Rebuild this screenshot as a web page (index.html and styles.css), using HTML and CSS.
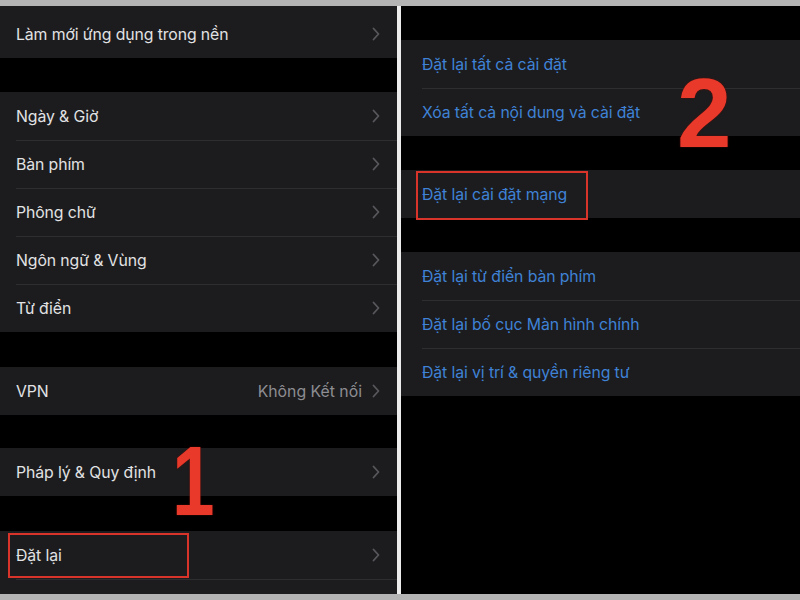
FILE: index.html
```html
<!DOCTYPE html>
<html lang="vi">
<head>
<meta charset="utf-8">
<title>Đặt lại</title>
<link rel="stylesheet" href="styles.css">
</head>
<body>
<div class="frame">
  <div class="panel left">
    <div class="group first">
      <div class="row"><span class="label">Làm mới ứng dụng trong nền</span><svg class="chev" viewBox="0 0 8 14"><polyline points="1.5,1.5 6.5,7 1.5,12.5"/></svg></div>
    </div>
    <div class="gap g34"></div>
    <div class="group">
      <div class="row"><span class="label">Ngày &amp; Giờ</span><svg class="chev" viewBox="0 0 8 14"><polyline points="1.5,1.5 6.5,7 1.5,12.5"/></svg></div>
      <div class="row"><span class="label">Bàn phím</span><svg class="chev" viewBox="0 0 8 14"><polyline points="1.5,1.5 6.5,7 1.5,12.5"/></svg></div>
      <div class="row"><span class="label">Phông chữ</span><svg class="chev" viewBox="0 0 8 14"><polyline points="1.5,1.5 6.5,7 1.5,12.5"/></svg></div>
      <div class="row"><span class="label">Ngôn ngữ &amp; Vùng</span><svg class="chev" viewBox="0 0 8 14"><polyline points="1.5,1.5 6.5,7 1.5,12.5"/></svg></div>
      <div class="row"><span class="label">Từ điển</span><svg class="chev" viewBox="0 0 8 14"><polyline points="1.5,1.5 6.5,7 1.5,12.5"/></svg></div>
    </div>
    <div class="gap g35"></div>
    <div class="group">
      <div class="row"><span class="label">VPN</span><span class="value">Không Kết nối</span><svg class="chev" viewBox="0 0 8 14"><polyline points="1.5,1.5 6.5,7 1.5,12.5"/></svg></div>
    </div>
    <div class="gap g33"></div>
    <div class="group">
      <div class="row"><span class="label">Pháp lý &amp; Quy định</span><svg class="chev" viewBox="0 0 8 14"><polyline points="1.5,1.5 6.5,7 1.5,12.5"/></svg></div>
    </div>
    <div class="gap g35"></div>
    <div class="group">
      <div class="row"><span class="label">Đặt lại</span><svg class="chev" viewBox="0 0 8 14"><polyline points="1.5,1.5 6.5,7 1.5,12.5"/></svg></div>
      <div class="row"></div>
    </div>
    <div class="mark box1"></div>
    <div class="num num1">1</div>
  </div>
  <div class="divider"></div>
  <div class="panel right">
    <div class="gap g34"></div>
    <div class="group blue">
      <div class="row"><span class="label">Đặt lại tất cả cài đặt</span></div>
      <div class="row"><span class="label">Xóa tất cả nội dung và cài đặt</span></div>
    </div>
    <div class="gap g34"></div>
    <div class="group blue">
      <div class="row"><span class="label">Đặt lại cài đặt mạng</span></div>
    </div>
    <div class="gap g34"></div>
    <div class="group blue">
      <div class="row"><span class="label">Đặt lại từ điển bàn phím</span></div>
      <div class="row"><span class="label">Đặt lại bố cục Màn hình chính</span></div>
      <div class="row"><span class="label">Đặt lại vị trí &amp; quyền riêng tư</span></div>
    </div>
    <div class="mark box2"></div>
    <div class="num num2">2</div>
  </div>
</div>
</body>
</html>
```

FILE: styles.css
```css
html, body {
  margin: 0;
  padding: 0;
  width: 800px;
  height: 600px;
  overflow: hidden;
  background: #b4b4b4;
}

.frame {
  display: flex;
  height: 588px;
  margin-top: 6px;
  font-family: "Inter", "Liberation Sans", sans-serif;
}

.panel {
  position: relative;
  background: #000;
  overflow: hidden;
  display: flex;
  flex-direction: column;
}

.left {
  width: 397px;
}

.divider {
  width: 4px;
  background: #ececec;
}

.right {
  flex: 1;
}

.group {
  background: #1c1c1e;
}

.group.first {
  padding-top: 4px;
}

.gap { flex: none; }
.g33 { height: 33px; }
.g34 { height: 34px; }
.g35 { height: 35px; }

.row {
  height: 48px;
  display: flex;
  align-items: center;
  padding: 0 17px 0 16px;
  position: relative;
  box-sizing: border-box;
}

.row + .row::before {
  content: "";
  position: absolute;
  top: 0;
  left: 16px;
  right: 0;
  height: 1px;
  background: #2e2e31;
}

.label {
  flex: 1;
  color: #e2e2e4;
  font-size: 15.8px;
  letter-spacing: -0.1px;
}

.value {
  color: #8d8d92;
  font-size: 15.8px;
  margin-right: 10px;
}

.chev {
  width: 8px;
  height: 14px;
  flex: none;
}

.chev polyline {
  fill: none;
  stroke: #58585c;
  stroke-width: 1.8;
  stroke-linecap: round;
  stroke-linejoin: round;
}

.blue .row {
  padding-left: 21px;
}

.blue .row + .row::before {
  left: 21px;
}

.blue .label {
  color: #3f82d6;
}

.mark {
  position: absolute;
  border: 2px solid #d8342a;
  box-sizing: border-box;
}

.box1 {
  left: 8px;
  top: 527px;
  width: 181px;
  height: 45px;
}

.box2 {
  left: 15px;
  top: 165px;
  width: 172px;
  height: 49px;
}

.num {
  position: absolute;
  font-family: "Liberation Sans", "Arial", sans-serif;
  font-weight: 700;
  font-size: 98px;
  line-height: 1;
  color: #e8392a;
  text-shadow: 0 0 2px #5a0d08;
}

.num1 {
  left: 166px;
  top: 426px;
  transform: scaleX(0.78);
}

.num2 {
  left: 276px;
  top: 58px;
}
```
